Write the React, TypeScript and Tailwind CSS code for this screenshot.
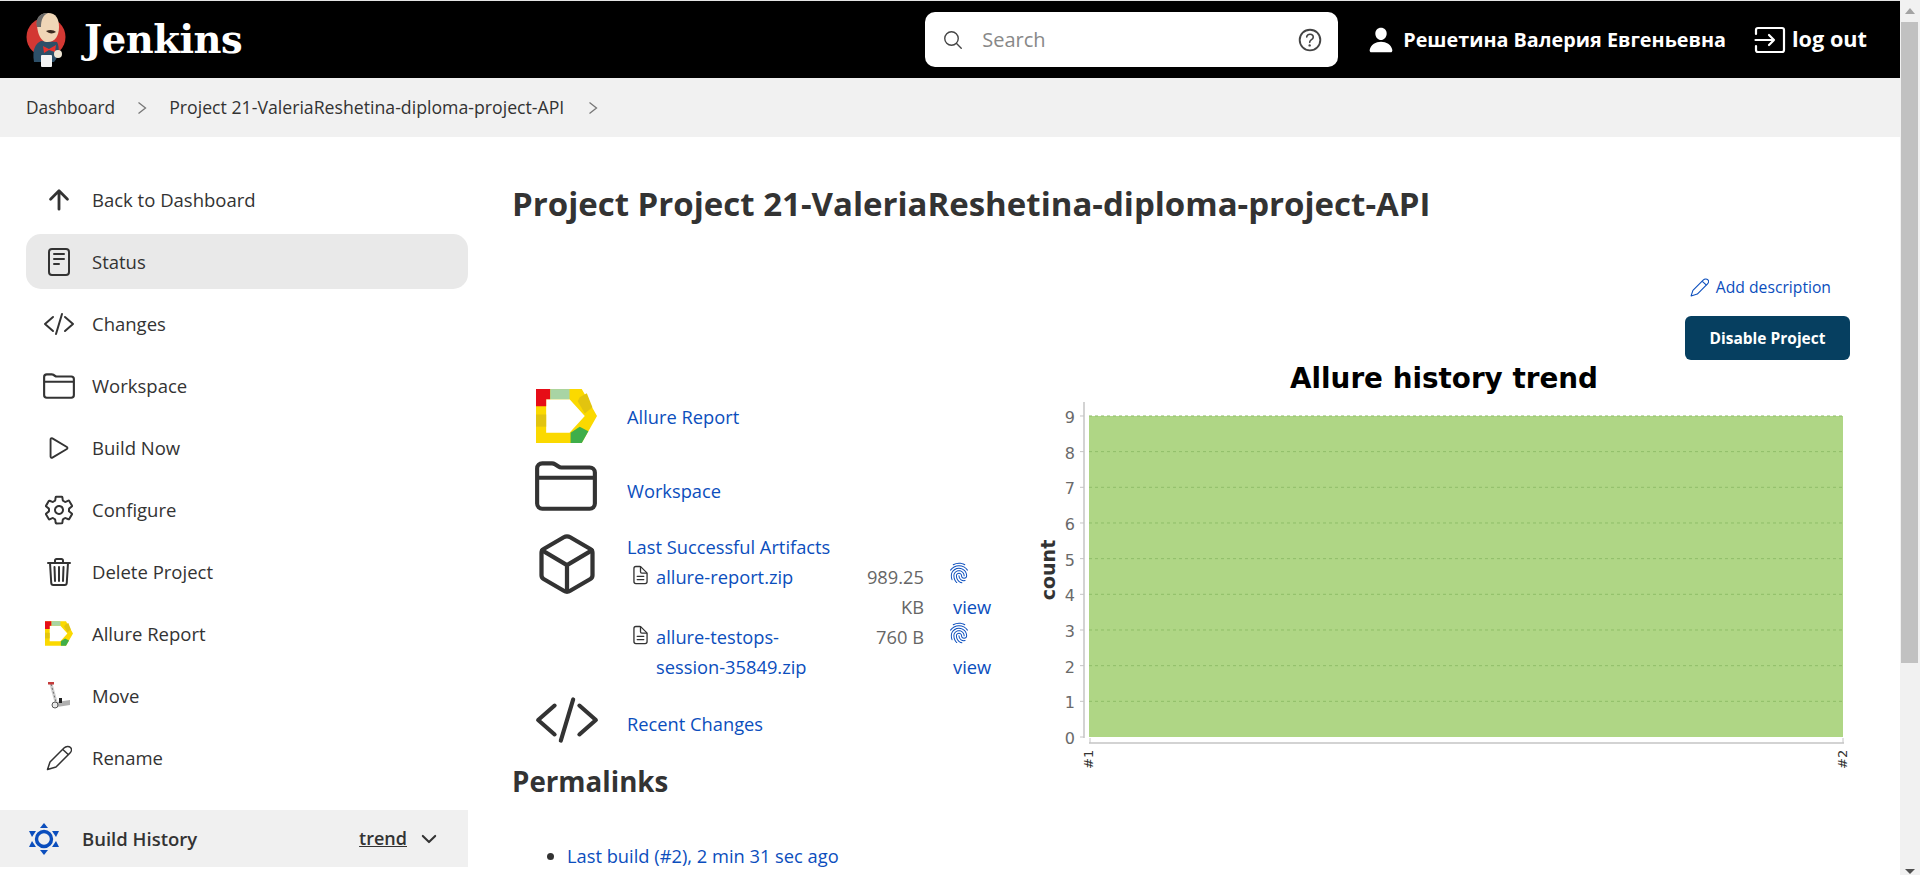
import React from "react";
import {
  IoArrowUpOutline, IoReaderOutline, IoCodeSlashOutline, IoFolderOutline, IoPlayOutline, IoSettingsOutline,
  IoTrashOutline, IoSearchOutline, IoHelpCircleOutline, IoPerson, IoChevronDown,
  IoCubeOutline, IoDocumentTextOutline, IoFingerPrintOutline,
} from "react-icons/io5";

const FONT = "font-['Open_Sans','Noto_Sans',sans-serif]";

function AllureIcon({ className }: { className?: string }) {
  return (
    <svg viewBox="0 0 60 53" className={className}>
      <polygon points="0,0 45,0 60,26.5 45,53 0,53 0,0 10,10 10,43 33,43 48,26.5 33,10 10,10" fill="#fbd900" fillRule="evenodd" />
      <polygon points="0,0 14,0 14,10 10,10 10,17 0,17" fill="#e60d17" />
      <rect x="14" y="0" width="19" height="10" fill="#a8d4a4" />
      <polygon points="43,8 50,4 55.5,18 48,24 41,12" fill="#e2c40f" />
      <rect x="0" y="25" width="10" height="12" fill="#e2c40f" />
      <polygon points="34,53 45,53 51.5,41.5 43,37 34,43" fill="#3fae4a" />
    </svg>
  );
}

function JenkinsLogo() {
  return (
    <svg viewBox="0 0 40 55" className="w-[40px] h-[55px]">
      <circle cx="20" cy="25" r="19.5" fill="#d33833" />
      <path d="M8 50 C6 38 9 32 15 29 L31 30 C34 36 33 44 28 50 Z" fill="#2d4f68" />
      <path d="M11 14 C10 5 15 1 22 1 C30 1 33 7 33 15 C33 25 28 31 20 30 C15 29 12 23 11 14 Z" fill="#f0d6b7" />
      <path d="M11 15 C9 7 13 1 22 1 C17 3 15 8 15 15 Z" fill="#6b6b6b" />
      <path d="M20 19 C24 17 28 18 30 20 C27 22 23 22 20 19 Z" fill="#3a2a20" />
      <path d="M17 34 L23 37 L30 33 L29 40 L23 38 L18 41 Z" fill="#e8332f" />
      <rect x="15" y="43" width="11" height="12" rx="1" fill="#f4f4f4" />
      <circle cx="32" cy="42" r="4" fill="#efe6d4" />
    </svg>
  );
}

function ScooterIcon() {
  return (
    <svg viewBox="0 0 24 28" className="w-[24px] h-[28px]">
      <path d="M4 2 L9 20" stroke="#cfcfcf" strokeWidth="3" fill="none" />
      <path d="M4 2 L9 20" stroke="#555" strokeWidth="0.8" fill="none" strokeDasharray="2 2" />
      <rect x="1" y="0" width="6" height="2.5" fill="#c43b3b" />
      <polygon points="10,20 23,18 23,23 10,25" fill="#b0b0b0" />
      <rect x="12" y="16" width="3" height="5" fill="#222" />
      <circle cx="8" cy="23" r="3" fill="#e8e8e8" stroke="#555" strokeWidth="1" />
    </svg>
  );
}

function HistoryIcon() {
  return (
    <svg viewBox="0 0 30 32" className="w-[30px] h-[32px]">
      <circle cx="15" cy="16" r="7.5" fill="none" stroke="#0b4ebd" strokeWidth="3.4" />
      <polygon points="15,0 19,5 11,5" fill="#0b4ebd" />
      <polygon points="15,32 11,27 19,27" fill="#0b4ebd" />
      <polygon points="0,8 7,8 3,14" fill="#0b4ebd" />
      <polygon points="30,8 23,8 27,14" fill="#0b4ebd" />
      <polygon points="0,24 3,18 7,24" fill="#0b4ebd" />
      <polygon points="30,24 27,18 23,24" fill="#0b4ebd" />
    </svg>
  );
}

function PencilIcon({ className }: { className?: string }) {
  return (
    <svg viewBox="0 0 26 26" fill="none" stroke="currentColor" strokeWidth="1.5" strokeLinejoin="round" className={className}>
      <path d="M1.5 24.5 L4 17 L18 3 C20 1 23 1 24.5 2.5 C26 4 25.5 6.5 24 8 L10 22 Z" />
      <path d="M16.8 4.5 L22.5 9.8" />
    </svg>
  );
}

function LogoutIcon() {
  return (
    <svg viewBox="0 0 32 28" fill="none" stroke="currentColor" strokeWidth="2.2" strokeLinecap="round" strokeLinejoin="round" className="w-[32px] h-[28px]">
      <path d="M2 8 V4 Q2 2 4 2 H28 Q30 2 30 4 V24 Q30 26 28 26 H4 Q2 26 2 24 V20" />
      <path d="M1.5 14 H20 M15 9 L20 14 L15 19" />
    </svg>
  );
}

function Crumb() {
  return (
    <svg viewBox="0 0 10 14" fill="none" stroke="#777" strokeWidth="1.3" className="w-[10px] h-[14px] shrink-0">
      <polyline points="1.5,1.5 8.5,7 1.5,12.5" />
    </svg>
  );
}

function SideItem({ icon, label, active }: { icon: React.ReactNode; label: string; active?: boolean }) {
  return (
    <div className={`flex items-center h-[55px] mb-[7px] rounded-[15px] pl-[15px] ${active ? "bg-[#e9e9e9]" : ""}`}>
      <div className="w-[36px] flex items-center justify-center shrink-0">{icon}</div>
      <span className="ml-[15px] text-[18.5px] text-[#333]">{label}</span>
    </div>
  );
}

function Chart() {
  const y = (v: number) => 378 - v * 35.67;
  return (
    <svg width="810" height="440" viewBox="0 0 810 440" className="block overflow-visible">
      <text x="404" y="28" textAnchor="middle" fontFamily="DejaVu Sans" fontWeight="700" fontSize="27.8" fill="#000">Allure history trend</text>
      <rect x="49" y="56" width="754" height="321" fill="#afd685" />
      {[1, 2, 3, 4, 5, 6, 7, 8, 9].map((v) => (
        <line key={v} x1="49" x2="803" y1={y(v) - 1} y2={y(v) - 1} stroke="#8fbd68" strokeWidth="1" strokeDasharray="3 3" />
      ))}
      <line x1="44" x2="44" y1="42" y2="378" stroke="#c4c4c4" strokeWidth="1.5" />
      <line x1="49" x2="804" y1="383" y2="383" stroke="#c4c4c4" strokeWidth="1.5" />
      <line x1="50" x2="50" y1="378" y2="383" stroke="#c4c4c4" />
      <line x1="803" x2="803" y1="378" y2="383" stroke="#c4c4c4" />
      {[0, 1, 2, 3, 4, 5, 6, 7, 8, 9].map((v) => (
        <g key={v}>
          <line x1="40" x2="44" y1={y(v) - 1} y2={y(v) - 1} stroke="#c4c4c4" />
          <text x="35" y={y(v) + 6} textAnchor="end" fontFamily="DejaVu Sans" fontSize="16" fill="#6a6a6a">{v}</text>
        </g>
      ))}
      <text transform="translate(15 210) rotate(-90)" textAnchor="middle" fontFamily="DejaVu Sans" fontWeight="700" fontSize="19" fill="#333">count</text>
      <text transform="translate(53 409) rotate(-90)" fontFamily="DejaVu Sans" fontSize="13" fill="#333">#1</text>
      <text transform="translate(807 409) rotate(-90)" fontFamily="DejaVu Sans" fontSize="13" fill="#333">#2</text>
    </svg>
  );
}

function Artifact({ name, size }: { name: React.ReactNode; size: React.ReactNode }) {
  return (
    <div className="flex items-start leading-[30px] text-[18.3px]">
      <div className="w-[29px] shrink-0 flex justify-end pr-[5px] pt-[1px]"><IoDocumentTextOutline className="w-[21px] h-[24px] text-[#333]" /></div>
      <a className="w-[194px] shrink-0 text-[#0b4ebd]">{name}</a>
      <span className="w-[74px] shrink-0 text-right text-[#666]">{size}</span>
      <a className="ml-[26px] block text-[#0b4ebd]">
        <IoFingerPrintOutline className="w-[22px] h-[24px] block -ml-[2px] -mt-[1px] mb-[7px]" />
        <span className="block pl-[3px]">view</span>
      </a>
    </div>
  );
}

export default function App() {
  return (
    <div className={`${FONT} h-[875px] w-full overflow-hidden flex bg-white text-[#333]`}>
      <div className="flex-1 min-w-0 flex flex-col h-[875px] overflow-hidden">
        <div className="h-px bg-[#e4e4e4] shrink-0" />
        <header className="h-[77px] shrink-0 bg-black flex items-center text-white">
          <div className="ml-[26px]"><JenkinsLogo /></div>
          <span className="ml-[18px] font-['DejaVu_Serif',serif] font-bold text-[38.5px] tracking-[-0.5px]">Jenkins</span>
          <div className="ml-auto w-[413px] h-[55px] rounded-[10px] bg-white flex items-center pl-[17px] pr-[13px] text-[#888]">
            <IoSearchOutline className="w-[22px] h-[22px] text-[#444]" />
            <span className="ml-[18px] text-[20px]">Search</span>
            <IoHelpCircleOutline className="ml-auto w-[30px] h-[30px] text-[#444]" />
          </div>
          <IoPerson className="ml-[29px] w-[28px] h-[28px]" />
          <span className="ml-[8px] text-[19.8px] font-bold">Решетина Валерия Евгеньевна</span>
          <div className="ml-[28px]"><LogoutIcon /></div>
          <span className="ml-[6px] mr-[33px] text-[21.7px] font-bold">log out</span>
        </header>
        <nav className="h-[59px] shrink-0 bg-[#f1f1f1] flex items-center pl-[26px] text-[17.7px] text-[#333]">
          <span className="text-[17.3px]">Dashboard</span>
          <div className="ml-[22px] flex"><Crumb /></div>
          <span className="ml-[22px]">Project 21-ValeriaReshetina-diploma-project-API</span>
          <div className="ml-[24px] flex"><Crumb /></div>
        </nav>
        <div className="flex flex-1 min-h-0">
          <aside className="w-[468px] shrink-0 pt-[35px]">
            <div className="pl-[26px]">
              <SideItem icon={<IoArrowUpOutline className="w-[30px] h-[30px]" />} label="Back to Dashboard" />
              <SideItem active icon={<IoReaderOutline className="w-[32px] h-[32px]" />} label="Status" />
              <SideItem icon={<IoCodeSlashOutline className="w-[32px] h-[32px]" />} label="Changes" />
              <SideItem icon={<IoFolderOutline className="w-[34px] h-[34px]" />} label="Workspace" />
              <SideItem icon={<IoPlayOutline className="w-[30px] h-[30px]" />} label="Build Now" />
              <SideItem icon={<IoSettingsOutline className="w-[32px] h-[32px]" />} label="Configure" />
              <SideItem icon={<IoTrashOutline className="w-[32px] h-[32px]" />} label="Delete Project" />
              <SideItem icon={<AllureIcon className="w-[28px] h-[25px]" />} label="Allure Report" />
              <SideItem icon={<ScooterIcon />} label="Move" />
              <SideItem icon={<PencilIcon className="w-[26px] h-[26px]" />} label="Rename" />
            </div>
            <div className="mt-[25px] h-[57px] bg-[#f0f0f0] flex items-center pl-[29px] pr-[28px] text-[18.5px] font-semibold">
              <HistoryIcon />
              <span className="ml-[23px]">Build History</span>
              <span className="ml-auto underline text-[18px]">trend</span>
              <IoChevronDown className="ml-[11px] w-[22px] h-[22px] text-[#333]" />
            </div>
          </aside>
          <main className="flex-1 min-w-0 pl-[44px] pr-[50px]">
            <h1 className="mt-[45px] h-[44px] text-[33px] leading-[44px] font-bold whitespace-nowrap">Project Project 21-ValeriaReshetina-diploma-project-API</h1>
            <div className="mt-[47px] h-[28px] flex items-center justify-end pr-[19px] pt-[1px] text-[15.7px] text-[#0b4ebd]">
              <PencilIcon className="w-[19px] h-[19px] mr-[7px]" />
              <span>Add description</span>
            </div>
            <div className="mt-[15px] flex justify-end">
              <button className="w-[165px] h-[44px] pt-[2px] rounded-[6px] bg-[#063f60] text-white text-[15.5px] font-bold">Disable Project</button>
            </div>
            <div className="flex">
              <div className="w-[528px] shrink-0 pt-[29px] text-[18.3px]">
                <div className="flex items-center h-[54px] pl-[24px]">
                  <AllureIcon className="w-[61px] h-[54px]" />
                  <a className="ml-[30px] mt-[2px] text-[#0b4ebd]">Allure Report</a>
                </div>
                <div className="flex items-center h-[60px] mt-[17px] pl-[24px]">
                  <IoFolderOutline className="w-[66px] h-[66px] -ml-[3px] -mr-[2px] -mt-[7px] self-start shrink-0" />
                  <a className="ml-[30px] mt-[2px] text-[#0b4ebd]">Workspace</a>
                </div>
                <div className="flex items-start pl-[24px]">
                  <IoCubeOutline className="w-[68px] h-[68px] -ml-[3px] -mr-[4px] mt-[10px] shrink-0" />
                  <div className="ml-[30px] mt-[12px]">
                    <a className="block leading-[29px] text-[#0b4ebd]">Last Successful Artifacts</a>
                    <div className="mt-[1px]">
                      <Artifact name="allure-report.zip" size="989.25 KB" />
                      <Artifact name={<>allure-testops-<br />session-35849.zip</>} size="760 B" />
                    </div>
                  </div>
                </div>
                <div className="flex items-center h-[48px] mt-[18px] pl-[24px]">
                  <IoCodeSlashOutline className="w-[66px] h-[66px] -mx-[2.5px] -mt-[8px] shrink-0" />
                  <a className="ml-[30px] text-[#0b4ebd]">Recent Changes</a>
                </div>
              </div>
              <Chart />
            </div>
            <h2 className="-mt-[37px] h-[36px] leading-[36px] text-[27.7px] font-bold">Permalinks</h2>
            <ul className="mt-[42px] list-disc pl-[55px] text-[18.3px] leading-[30px] text-[#0b4ebd] marker:text-[#333]">
              <li>Last build (#2), 2 min 31 sec ago</li>
            </ul>
          </main>
        </div>
      </div>
      <div className="w-[20px] shrink-0 h-[875px] bg-[#f1f1f1] flex flex-col items-start">
        <div className="h-[22px] w-[17px] ml-px flex items-center justify-center">
          <div className="w-0 h-0 border-l-[5px] border-r-[5px] border-b-[6px] border-l-transparent border-r-transparent border-b-[#a3a3a3]" />
        </div>
        <div className="w-[17px] ml-px h-[641px] bg-[#c1c1c1]" />
        <div className="mt-auto mb-[1px] h-[6px] w-[17px] ml-px flex items-center justify-center">
          <div className="w-0 h-0 border-l-[5px] border-r-[5px] border-t-[5px] border-l-transparent border-r-transparent border-t-[#505050]" />
        </div>
      </div>
    </div>
  );
}
